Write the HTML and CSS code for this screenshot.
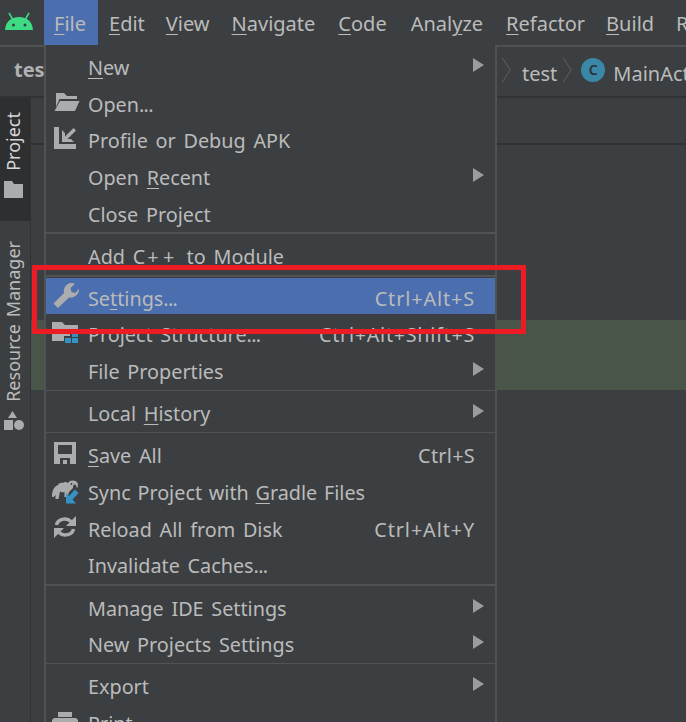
FILE: index.html
```html
<!DOCTYPE html>
<html lang="en">
<head>
<meta charset="utf-8">
<title>Android Studio File menu</title>
<link rel="stylesheet" href="styles.css">
</head>
<body>
<div class="ide">
  <header class="menubar">
    <div class="logo">
      <svg width="44" height="45" viewBox="0 0 44 45"><path class="android" d="M5 30C5.500 22 11 17 19 17S32.500 22 33 30Z"/><path class="antenna" d="M9 13L12.500 19M29 13L25.500 19"/><circle class="eye" cx="13.500" cy="25" r="1.500"/><circle class="eye" cx="25" cy="25" r="1.500"/></svg>
    </div>
    <div class="top active"><u>F</u>ile</div>
    <div class="top tight"><u>E</u>dit</div>
    <div class="top"><u>V</u>iew</div>
    <div class="top loose"><u>N</u>avigate</div>
    <div class="top wider"><u>C</u>ode</div>
    <div class="top loose">Anal<u>y</u>ze</div>
    <div class="top tight"><u>R</u>efactor</div>
    <div class="top"><u>B</u>uild</div>
    <div class="top">Run</div>
  </header>

  <div class="crumbs">
    <b class="project-name">tes</b>
    <div class="trail">
      <svg class="chev" width="11" height="28" viewBox="0 0 11 28"><path d="M1 1L9.500 14L1 27"/></svg>
      <span class="crumb-first">test</span>
      <svg class="chev" width="11" height="28" viewBox="0 0 11 28"><path d="M1 1L9.500 14L1 27"/></svg>
      <span class="class-badge">C</span>
      <span>MainActivity</span>
    </div>
  </div>

  <div class="workspace">
    <aside class="stripe">
      <div class="tool selected">
        <span class="vert bright">Project</span>
        <svg width="22" height="20" viewBox="0 0 22 20"><path class="ic" d="M2 1H10L12 4H21V18H2Z"/></svg>
      </div>
      <div class="tool">
        <span class="vert">Resource Manager</span>
        <svg width="22" height="20" viewBox="0 0 22 20"><path class="ic" d="M10.500 0L15 7H6Z"/><rect class="ic" x="2" y="9" width="9" height="10"/><circle class="ic" cx="17" cy="14" r="5"/></svg>
      </div>
    </aside>
    <main class="editor">
      <div class="tabs"></div>
      <div class="current-line"></div>
    </main>
  </div>

  <nav class="menu">
    <div class="group">
      <div class="row"><span class="slot"></span><span class="label"><u>N</u>ew</span><span class="arrow"></span></div>
      <div class="row">
        <svg class="slot" viewBox="0 0 30 30"><path class="ic" d="M6 6H14L17 9H27V12H9.500L6 20Z"/><path class="ic" d="M10 14H29.500L25 24H4.500Z"/></svg>
        <span class="label">Open<span class="dots">...</span></span></div>
      <div class="row">
        <svg class="slot" viewBox="0 0 30 30"><path class="ic" d="M4 4H9V21H26V26H4Z"/><path class="ic" d="M12 7L15 10V13.500L23.500 5L26 7.500L17.500 16H21L24 19H12Z"/></svg>
        <span class="label">Profile or Debug APK</span></div>
      <div class="row"><span class="slot"></span><span class="label">Open <u>R</u>ecent</span><span class="arrow"></span></div>
      <div class="row"><span class="slot"></span><span class="label">Close Project</span></div>
    </div>
    <div class="sep thick"></div>
    <div class="group">
      <div class="row"><span class="slot"></span><span class="label">Add C<span class="plus">++</span> to Module</span></div>
    </div>
    <div class="sep thick snug"></div>
    <div class="group">
      <div class="row selected">
        <svg class="slot" viewBox="0 0 30 30"><path class="ic" d="M3.500 22.500L14 12C13 7 16.500 2.500 21 2C22.500 1.900 24 2.200 25 2.800L20.500 7L21.500 11L25.500 12L29 7.500C29.500 12.500 25 17.500 19 16.500L8 27Z"/></svg>
        <span class="label">Se<u>t</u>tings<span class="dots">...</span></span><span class="keys">Ctrl+Alt+S</span></div>
      <div class="row">
        <svg class="slot" viewBox="0 0 30 30"><path class="ic" d="M2 5H12L15 8H28V13H20V19H14V24H2Z"/><path class="blue" d="M22 15H28V20H22ZM15 21H21V26H15ZM22 21H28V26H22Z"/></svg>
        <span class="label">Project Structure<span class="dots">...</span></span><span class="keys long">Ctrl+Alt+Shift+S</span></div>
      <div class="row short"><span class="slot"></span><span class="label">File Properties</span><span class="arrow"></span></div>
    </div>
    <div class="sep"></div>
    <div class="group">
      <div class="row"><span class="slot"></span><span class="label">Local <u>H</u>istory</span><span class="arrow"></span></div>
    </div>
    <div class="sep"></div>
    <div class="group">
      <div class="row">
        <svg class="slot" viewBox="0 0 30 30"><path class="ic" fill-rule="evenodd" d="M4 4H26V26H4ZM8 7V16H22V7ZM10 20V26H20V20ZM13 22H17V26H13Z"/></svg>
        <span class="label"><u>S</u>ave All</span><span class="keys brief">Ctrl+S</span></div>
      <div class="row">
        <svg class="slot" viewBox="0 0 30 30"><path class="ic" d="M2 20C2.500 14 5 11 8 10C9 8 11 7.500 13 8C14 6.500 16.500 6.500 18 8C19.500 5 23 5 25.500 6C28.500 7.500 28.500 11 27 13L25.500 9.500C23.500 9 23 11 23 13L19 17L17.500 22H14.500V17C13 17.500 11.500 17.500 10 16.500L8.500 24H5.500V20L3.500 22H2Z"/><circle cx="21.500" cy="9" r="0.900" fill="#3c3f41"/><path class="blue" d="M16 18L19 21L25 14.500L28.500 18L22.500 24.500L26 28.500H16Z"/></svg>
        <span class="label close-words">Sync Project with <u>G</u>radle Files</span></div>
      <div class="row">
        <svg class="slot" viewBox="0 0 30 30"><path class="stroke" d="M6.500 13C7.500 7.500 16 4.500 21 9.500"/><path class="ic" d="M26 4V14H16Z"/><path class="stroke" d="M23.500 17C22.500 22.500 14 25.500 9 20.500"/><path class="ic" d="M4 26V16H14Z"/></svg>
        <span class="label">Reload All from Disk</span><span class="keys">Ctrl+Alt+Y</span></div>
      <div class="row"><span class="slot"></span><span class="label">Invalidate Caches<span class="dots">...</span></span></div>
    </div>
    <div class="sep thick"></div>
    <div class="group">
      <div class="row"><span class="slot"></span><span class="label">Manage IDE Settings</span><span class="arrow"></span></div>
      <div class="row"><span class="slot"></span><span class="label">New Projects Settings</span><span class="arrow"></span></div>
    </div>
    <div class="sep last"></div>
    <div class="group">
      <div class="row"><span class="slot"></span><span class="label">Export</span><span class="arrow"></span></div>
      <div class="row">
        <svg class="slot" viewBox="0 0 30 30"><path class="ic" d="M8 6H22V11H8ZM4 12H26L28 14V25H2V14Z"/></svg>
        <span class="label">Print<span class="dots">...</span></span></div>
    </div>
  </nav>

  <div class="callout"></div>
</div>
</body>
</html>
```
FILE: styles.css
```css
* { box-sizing: border-box; }
html, body { margin: 0; padding: 0; background: #3c3f41; }
.ide {
  position: relative;
  width: 686px;
  height: 722px;
  overflow: hidden;
  background: #3c3f41;
  color: #bbbbbb;
  font-family: "Noto Sans", sans-serif;
  font-size: 20px;
  word-spacing: 2px;
}
u { text-decoration: underline; text-decoration-thickness: 1px; text-underline-offset: 3px; }

.menubar { display: flex; height: 47px; border-bottom: 2px solid #505253; white-space: nowrap; }
.logo { flex: none; width: 44px; height: 45px; }
.android { fill: #3ddc84; }
.antenna { stroke: #3ddc84; stroke-width: 1.500; fill: none; }
.eye { fill: #3c3f41; }
.top { flex: none; height: 45px; padding: 8px 11px 0; line-height: 32px; }
.top.active { padding: 8px 12px 0 10px; background: #4b6eaf; }
.top.tight { padding-right: 10px; }
.top.loose { padding-right: 12px; }
.top.wider { padding-right: 13px; }

.crumbs { display: flex; height: 51px; border-bottom: 2px solid #323232; }
.project-name { flex: none; width: 497px; padding: 7px 0 0 14px; line-height: 32px; color: #afb1b3; }
.trail { display: flex; align-items: center; gap: 8px; margin-top: -3px; padding-left: 4px; white-space: nowrap; }
.trail span { padding-top: 6px; }
.trail .crumb-first { margin-left: 2px; margin-right: -3px; }
.chev { flex: none; height: 26px; }
.chev path { fill: none; stroke: #626567; stroke-width: 1; }
.trail .class-badge {
  flex: none;
  width: 24px;
  height: 24px;
  padding: 0;
  margin: 0;
  border-radius: 50%;
  background: #3a87a8;
  color: #2f3234;
  font-size: 14px;
  font-weight: 600;
  line-height: 24px;
  text-align: center;
}

.workspace { display: flex; height: 624px; }
.stripe { flex: none; width: 31px; border-right: 1px solid #323232; }
.tool { display: flex; flex-direction: column; align-items: center; gap: 9px; height: 123px; padding: 14px 4px 0 0; }
.tool.selected { background: #2d2f30; }
.tool + .tool { padding-top: 20px; height: auto; }
.vert { writing-mode: vertical-rl; transform: rotate(180deg); font-size: 18px; line-height: 26px; word-spacing: 2px; }
.vert.bright { color: #d6d6d6; }

.editor { flex: 1; min-width: 0; }
.tabs { height: 47px; border-bottom: 2px solid #323232; }
.current-line { height: 70px; margin-top: 175px; background: #4a554a; }

.menu {
  position: absolute;
  left: 44px;
  top: 45px;
  width: 453px;
  height: 700px;
  padding-top: 2px;
  background: #3c3f41;
  border: solid #505253;
  border-width: 0 2px;
  font-size: 19.800px;
  word-spacing: 2.600px;
}
.row { display: flex; align-items: center; height: 36.600px; padding: 0 11px 0 4px; white-space: nowrap; }
.row.short { height: 36px; }
.row.selected { height: 36px; background: #4b6eaf; }
.slot { flex: none; display: block; width: 30px; height: 30px; margin-right: 8px; }
.label { flex: 1; padding-top: 6px; line-height: 30px; }
.close-words { word-spacing: 1.600px; }
.dots { letter-spacing: -0.700px; }
.plus { letter-spacing: 4.500px; margin-left: 2px; }
.keys { flex: none; padding-top: 6px; padding-right: 9px; line-height: 30px; word-spacing: 0; letter-spacing: 0.900px; }
.keys.long { letter-spacing: 0.700px; }
.keys.brief { letter-spacing: 0.300px; }
.arrow { flex: none; width: 0; height: 0; border-style: solid; border-width: 7px 0 7px 11px; border-color: transparent transparent transparent #9a9c9e; }
.sep { height: 6px; padding-top: 3px; }
.sep.thick { padding-top: 2px; }
.sep.snug { height: 5.400px; }
.sep.last { height: 5px; padding-top: 2px; }
.sep::before { content: ""; display: block; height: 1px; background: #505253; }
.sep.thick::before { height: 2px; }

.ic { fill: #aaacae; }
.blue { fill: #3592c4; }
.stroke { fill: none; stroke: #aaacae; stroke-width: 3.500; }

.callout {
  position: absolute;
  left: 32px;
  top: 265px;
  width: 494px;
  height: 69px;
  border: 5px solid #ed1c24;
}
```
